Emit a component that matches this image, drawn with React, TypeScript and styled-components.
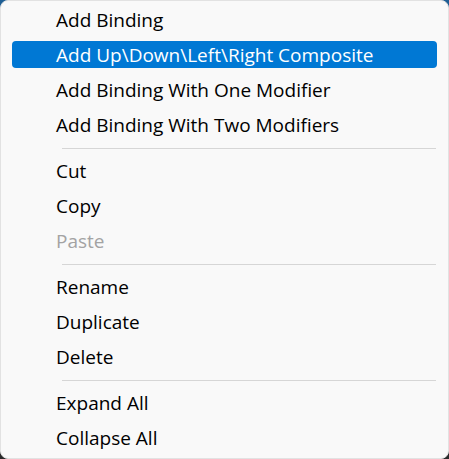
import React from "react";
import styled, { createGlobalStyle } from "styled-components";

const Global = createGlobalStyle`
  html, body {
    margin: 0;
    padding: 0;
    width: 449px;
    height: 459px;
    overflow: hidden;
    background: linear-gradient(180deg, #1f5f95 0%, #264a6a 40%, #2a2a2a 100%);
  }
  * { box-sizing: border-box; }
`;

const Menu = styled.div`
  width: 449px;
  height: 459px;
  background: #f9f9f9;
  border: 1px solid #e2e2e2;
  border-radius: 8px;
  padding: 1px 0 0 0;
  display: flex;
  flex-direction: column;
  font-family: "Open Sans", "Noto Sans", sans-serif;
  font-size: 19px;
  overflow: hidden;
`;

const Item = styled.div<{ $active?: boolean; $disabled?: boolean }>`
  height: 35px;
  padding: 4px 11px;
  display: flex;
`;

const ItemInner = styled.div<{ $active?: boolean; $disabled?: boolean }>`
  flex: 1;
  display: flex;
  align-items: center;
  padding-left: 44px;
  border-radius: 4px;
  background: ${(p) => (p.$active ? "#0078d4" : "transparent")};
  color: ${(p) => (p.$active ? "#ffffff" : p.$disabled ? "#a3a3a3" : "#000000")};
  white-space: nowrap;
`;

const Separator = styled.div`
  height: 1px;
  background: #d6d6d6;
  margin: 6px 12px 4px 61px;
`;

type Entry = { label: string; active?: boolean; disabled?: boolean } | "sep";

const entries: Entry[] = [
  { label: "Add Binding" },
  { label: "Add Up\\Down\\Left\\Right Composite", active: true },
  { label: "Add Binding With One Modifier" },
  { label: "Add Binding With Two Modifiers" },
  "sep",
  { label: "Cut" },
  { label: "Copy" },
  { label: "Paste", disabled: true },
  "sep",
  { label: "Rename" },
  { label: "Duplicate" },
  { label: "Delete" },
  "sep",
  { label: "Expand All" },
  { label: "Collapse All" },
];

export default function App() {
  return (
    <>
      <Global />
      <Menu>
        {entries.map((e, i) =>
          e === "sep" ? (
            <Separator key={i} />
          ) : (
            <Item key={i}>
              <ItemInner $active={e.active} $disabled={e.disabled}>
                {e.label}
              </ItemInner>
            </Item>
          )
        )}
      </Menu>
    </>
  );
}
